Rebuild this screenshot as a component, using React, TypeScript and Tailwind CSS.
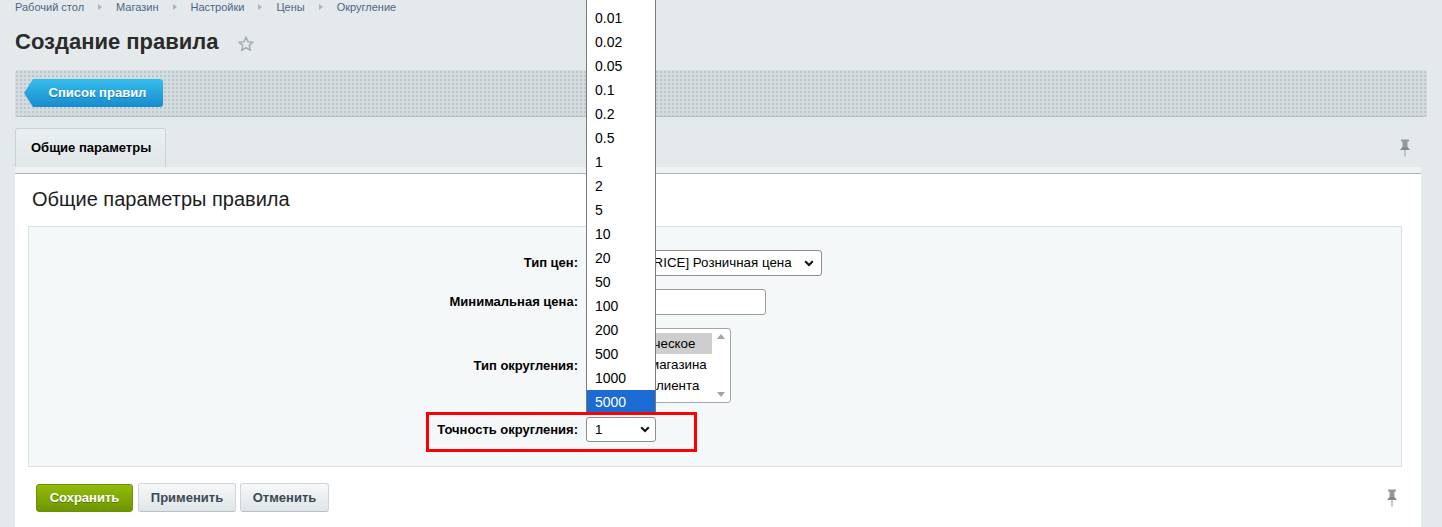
import React from 'react';

const crumbs = ['Рабочий стол', 'Магазин', 'Настройки', 'Цены', 'Округление'];
const precisions = ['0.01', '0.02', '0.05', '0.1', '0.2', '0.5', '1', '2', '5', '10', '20', '50', '100', '200', '500', '1000', '5000'];

const Pin = ({ className = '' }: { className?: string }) => (
  <svg width="12" height="18" viewBox="0 0 12 18" className={className}>
    <rect x="2" y="0.5" width="8" height="2" rx="0.5" fill="#8f9a9f" />
    <rect x="3.5" y="2" width="5" height="6" fill="#8f9a9f" />
    <path d="M1 11 L3.5 8 L8.5 8 L11 11 Z" fill="#7f8a8f" />
    <rect x="5.5" y="11" width="1" height="6.5" fill="#8f9a9f" />
  </svg>
);

const Chevron = () => (
  <svg width="10" height="7" viewBox="0 0 10 7" className="shrink-0">
    <path d="M1.2 1.3 L5 5 L8.8 1.3" fill="none" stroke="#111" strokeWidth="2" />
  </svg>
);

export default function App() {
  return (
    <div className="relative h-[527px] overflow-hidden bg-[#e4eaec] font-['Liberation_Sans',Arial,sans-serif] text-[13px] text-black">
      {/* Breadcrumbs */}
      <div className="flex h-[14px] items-center px-[15px] text-[11px] text-[#4d6585]">
        {crumbs.map((c, i) => (
          <React.Fragment key={c}>
            <span>{c}</span>
            {i < crumbs.length - 1 && (
              <span className="mx-[14px] inline-block h-0 w-0 border-y-[3.5px] border-l-[4px] border-y-transparent border-l-[#aab4b9]" />
            )}
          </React.Fragment>
        ))}
      </div>

      {/* Title */}
      <div className="mt-[14px] flex h-[28px] items-center px-[15px]">
        <h1 className="text-[22px] font-bold leading-[28px] text-[#2b2b2b]">Создание правила</h1>
        <svg width="18" height="18" viewBox="0 0 24 24" className="ml-[18px] mt-[3px]">
          <path
            d="M12 2.8 L14.7 9 L21.4 9.5 L16.3 13.9 L17.9 20.5 L12 17 L6.1 20.5 L7.7 13.9 L2.6 9.5 L9.3 9 Z"
            fill="none"
            stroke="#a4adb2"
            strokeWidth="2"
            strokeLinejoin="round"
          />
        </svg>
      </div>

      {/* Toolbar */}
      <div className="mx-[15px] mt-[14px] h-[47px] rounded-[3px] border-b border-[#b9c3c7] bg-[#d4dcdf] bg-[radial-gradient(#bcc6ca_0.8px,transparent_0.9px)] bg-[length:4px_4px] pl-[9px] pt-[9px]">
        <div className="flex h-[28px] w-[139px] items-center justify-center rounded-r-[3px] bg-gradient-to-b from-[#35bdec] to-[#178ccf] pl-[8px] text-[13px] font-bold text-white [clip-path:polygon(9px_0,100%_0,100%_100%,9px_100%,0_50%)] [text-shadow:0_1px_0_rgba(0,0,0,0.25)]">
          Список правил
        </div>
      </div>

      {/* Tabs */}
      <div className="mt-[11px] flex items-end justify-between pl-[15px] pr-[31px]">
        <div className="flex h-[39px] w-[151px] items-center rounded-t-[3px] border-x border-t border-[#c9d2d6] bg-gradient-to-b from-[#eaeff1] to-[#e1e8ea] pl-[15px] text-[13px] font-bold text-black">
          Общие параметры
        </div>
        <Pin className="mb-[10px]" />
      </div>

      {/* Panel */}
      <div className="mx-[15px] w-[1406px]">
        <div className="h-[7px] border-b border-[#a9b4b8] bg-[#eef2f3]" />
        <div className="bg-white pb-[20px]">
          <h2 className="px-[17px] pt-[13px] text-[20px] leading-[24px] text-[#1c1c1c]">Общие параметры правила</h2>

          <div className="ml-[13px] mr-[19px] mt-[15px] h-[241px] border border-[#d8e0e3] bg-[#f5f8f9] pt-[23px]">
            {/* Тип цен */}
            <div className="flex items-center gap-[8px]">
              <div className="w-[549px] text-right font-bold">Тип цен:</div>
              <div className="flex h-[26px] w-[236px] items-center justify-between rounded-[3px] border border-[#8f8f8f] bg-white pl-[11px] pr-[7px] text-[13.33px]">
                <span className="whitespace-nowrap">[BASE_PRICE] Розничная цена</span>
                <Chevron />
              </div>
            </div>
            {/* Минимальная цена */}
            <div className="mt-[13px] flex items-center gap-[8px]">
              <div className="w-[549px] text-right font-bold">Минимальная цена:</div>
              <div className="h-[26px] w-[180px] rounded-[3px] border border-[#9a9a9a] bg-white" />
            </div>
            {/* Тип округления */}
            <div className="mt-[13px] flex items-center gap-[8px]">
              <div className="w-[549px] text-right font-bold">Тип округления:</div>
              <div className="flex h-[75px] w-[145px] rounded-[3px] border border-[#a5a5a5] bg-white text-[13.33px]">
                <div className="min-w-0 flex-1 whitespace-nowrap pl-[1px] pt-[4px] leading-[21px]">
                  <div className="bg-[#cecece] pl-[4px]">Математическое</div>
                  <div className="pl-[4px]">В пользу магазина</div>
                  <div className="pl-[4px]">В пользу клиента</div>
                </div>
                <div className="flex w-[18px] flex-col items-center justify-between py-[5px]">
                  <span className="h-0 w-0 border-x-[4.5px] border-b-[5px] border-x-transparent border-b-[#a3a3a3]" />
                  <span className="h-0 w-0 border-x-[4.5px] border-t-[5px] border-x-transparent border-t-[#a3a3a3]" />
                </div>
              </div>
            </div>
            {/* Точность округления */}
            <div className="mt-[14px] flex items-center gap-[8px]">
              <div className="w-[549px] text-right font-bold">Точность округления:</div>
              <div className="flex h-[25px] w-[70px] items-center justify-between rounded-[3px] border border-[#8f8f8f] bg-white pl-[8px] pr-[5px] text-[13.33px]">
                <span>1</span>
                <Chevron />
              </div>
            </div>
          </div>

          {/* Buttons */}
          <div className="mt-[16px] flex items-center pl-[21px] pr-[23px]">
            <div className="flex h-[28px] w-[97px] items-center justify-center rounded-[3px] border border-[#6c8f07] bg-gradient-to-b from-[#93bb0c] to-[#6d9600] font-bold text-white [text-shadow:0_1px_0_rgba(0,0,0,0.3)]">
              Сохранить
            </div>
            <div className="ml-[5px] flex h-[29px] w-[98px] items-center justify-center rounded-[3px] border border-[#cfd6d9] border-b-[#b9c1c5] bg-gradient-to-b from-[#f6f8f9] to-[#dfe5e8] font-bold text-[#3c4952]">
              Применить
            </div>
            <div className="ml-[4px] flex h-[29px] w-[89px] items-center justify-center rounded-[3px] border border-[#cfd6d9] border-b-[#b9c1c5] bg-gradient-to-b from-[#f6f8f9] to-[#dfe5e8] font-bold text-[#3c4952]">
              Отменить
            </div>
            <div className="flex-1" />
            <Pin />
          </div>
        </div>
      </div>

      {/* Open dropdown list */}
      <div className="absolute left-[586px] top-0 h-[413px] w-[70px] overflow-hidden border-x border-b border-[#7a7a7a] bg-white">
        <div className="pt-[6px]">
          {precisions.map(p => (
            <div
              key={p}
              className={`h-[24px] pl-[8px] text-[14px] leading-[24px] ${p === '5000' ? 'bg-[#1a6bd3] text-white' : 'text-black'}`}
            >
              {p}
            </div>
          ))}
        </div>
      </div>

      {/* Highlight annotation */}
      <div className="absolute left-[426px] top-[412px] h-[40px] w-[271px] border-[3px] border-[#ff0000]" />
    </div>
  );
}
